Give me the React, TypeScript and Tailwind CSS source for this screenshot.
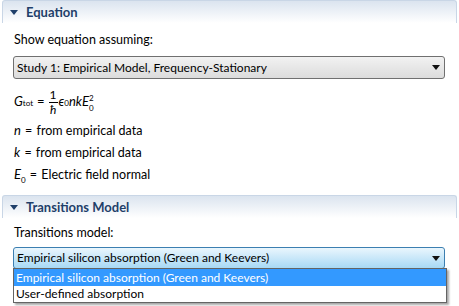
import React from 'react';

const font = { fontFamily: 'Lato, "Noto Sans", sans-serif' };

// Collapsible section header (Windows-7 style gradient bar)
const SectionHeader: React.FC<{ title: string }> = ({ title }) => (
  <div className="mx-[2px] h-[23px] flex items-center rounded-t-[3px] border-t border-x border-[#c9d6e6] bg-gradient-to-b from-[#dbe4ef] to-white">
    <svg width="8" height="5" viewBox="0 0 8 5" className="ml-[7px] mr-[8px]">
      <path d="M0 0 H8 L4 5 Z" fill="#1f3f6a" />
    </svg>
    <span className="text-[13px] font-bold text-[#1f3f6a] leading-none">{title}</span>
  </div>
);

const Arrow = () => (
  <svg width="8" height="5" viewBox="0 0 8 5">
    <path d="M0 0 H8 L4 5 Z" fill="#111" />
  </svg>
);

export default function App() {
  return (
    <div className="w-[459px] h-[306px] bg-white overflow-hidden text-[12px] text-black" style={font}>
      <SectionHeader title="Equation" />
      <div className="pl-[14px] pr-[14px]">
        <div className="mt-[10px] h-[14px] leading-[14px] text-[12.5px]">Show equation assuming:</div>
        <div className="mt-[9px] ml-[-1px] w-[432px] h-[23px] flex items-center justify-between px-[3px] rounded-[3px] border border-[#707070] bg-gradient-to-b from-[#f2f2f2] to-[#dcdcdc]">
          <span>Study 1: Empirical Model, Frequency-Stationary</span>
          <span className="mr-[1px]"><Arrow /></span>
        </div>

        {/* Equations */}
        <div className="mt-[10px] h-[26px] flex items-center text-[13px]">
          <span className="italic">G</span>
          <span className="text-[8px] self-end mb-[6px]">tot</span>
          <span className="mx-[4px]">=</span>
          <span className="flex flex-col items-center leading-none text-[12px]">
            <span className="border-b border-black px-[1px] pb-[1px]">1</span>
            <span className="italic pt-[1px]">ħ</span>
          </span>
          <span className="italic ml-[1px]">ϵ</span>
          <span className="text-[8px] self-end mb-[6px]">0</span>
          <span className="italic">nkE</span>
          <span className="flex flex-col text-[8px] leading-[8px] gap-[2px] mt-[1px]">
            <span>2</span>
            <span>0</span>
          </span>
        </div>
        <div className="mt-[4px] h-[22px] leading-[22px] text-[12.5px]">
          <span className="italic text-[13px]">n</span> <span className="mx-[1px]">=</span> from empirical data
        </div>
        <div className="h-[22px] leading-[22px] text-[12.5px]">
          <span className="italic text-[13px]">k</span> <span className="mx-[1px]">=</span> from empirical data
        </div>
        <div className="h-[22px] leading-[22px] text-[12.5px]">
          <span className="italic text-[13px]">E</span>
          <span className="text-[8px] align-sub">0</span> <span className="mx-[1px]">=</span> Electric field normal
        </div>
      </div>

      <div className="mt-[10px]">
        <SectionHeader title="Transitions Model" />
      </div>
      <div className="pl-[14px] pr-[14px]">
        <div className="mt-[8px] h-[14px] leading-[14px] text-[12.5px]">Transitions model:</div>
        <div className="relative mt-[7px] ml-[-1px] w-[432px]">
          <div className="h-[22px] flex items-center justify-between px-[3px] rounded-[3px] border border-[#3c7fb1] bg-gradient-to-b from-[#eaf6fd] to-[#a7d9f5]">
            <span>Empirical silicon absorption (Green and Keevers)</span>
            <span className="mr-[1px]"><Arrow /></span>
          </div>
          <div className="absolute left-0 top-[21px] w-[434px] border border-[#646464] bg-white shadow-[2px_2px_2px_rgba(0,0,0,0.35)]">
            <div className="h-[17px] leading-[17px] px-[2px] bg-[#3399ff] text-white">Empirical silicon absorption (Green and Keevers)</div>
            <div className="h-[16px] leading-[16px] px-[2px]">User-defined absorption</div>
          </div>
        </div>
      </div>
    </div>
  );
}
